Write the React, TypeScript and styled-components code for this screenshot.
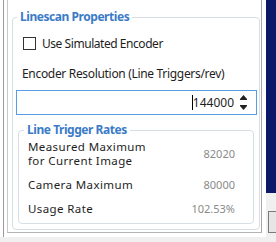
import React from "react";
import styled, { createGlobalStyle } from "styled-components";

const GlobalStyle = createGlobalStyle`
  html, body {
    margin: 0;
    padding: 0;
    background: #ffffff;
  }
  body {
    font-family: "Segoe UI", "Noto Sans", "Open Sans", sans-serif;
    color: #1e1e1e;
  }
`;

const Screen = styled.div`
  width: 276px;
  height: 242px;
  display: flex;
  flex-direction: column;
  overflow: hidden;
  background: #f0f0f0;
`;

const Main = styled.div`
  height: 237px;
  display: flex;
  background: #ffffff;
`;

const Pane = styled.div`
  margin-left: 3px;
  width: 260px;
  border-left: 1px solid #9a9a9a;
  display: flex;
`;

const Panel = styled.div`
  margin-left: 3px;
  width: 255px;
  height: 233px;
  border-left: 1px solid #c9c9c9;
  border-right: 1px solid #a8a8a8;
  border-bottom: 1px solid #b4b4b4;
  box-sizing: border-box;
`;

const SideColumn = styled.div`
  margin-left: 2px;
  flex: 1;
  display: flex;
  flex-direction: column;
`;

const NavyBar = styled.div`
  height: 193px;
  background: #0c1868;
`;

const SideRest = styled.div`
  flex: 1;
  background: #f0f0f0;
  padding-top: 18px;
  padding-left: 2px;
`;

const SideBox = styled.div`
  height: 20px;
  border: 1px solid #7a7a7a;
  border-right: none;
  background: #e6e6e6;
`;

const Group = styled.fieldset<{ $left: number; $width: number; $top: number }>`
  margin: ${({ $top }) => $top}px 0 0 ${({ $left }) => $left}px;
  width: ${({ $width }) => $width}px;
  padding: 0;
  min-width: 0;
  box-sizing: border-box;
  border: 1px solid #d5dfe5;
  border-radius: 4px;
`;

const GroupTitle = styled.legend<{ $indent: number }>`
  margin-left: ${({ $indent }) => $indent}px;
  padding: 0 3px;
  font-size: 12px;
  line-height: 14px;
  font-weight: 700;
  letter-spacing: -0.45px;
  color: #3b7bc8;
`;

const CheckRow = styled.label`
  display: flex;
  align-items: center;
  gap: 6px;
  margin: 11px 0 0 10px;
  height: 16px;
  font-size: 12px;
  letter-spacing: -0.45px;
`;

const CheckBox = styled.span`
  width: 13px;
  height: 13px;
  box-sizing: border-box;
  border: 1px solid #333333;
  background: #ffffff;
`;

const FieldLabel = styled.div`
  margin: 15px 0 0 9px;
  font-size: 12px;
  line-height: 16px;
  letter-spacing: -0.32px;
`;

const SpinInput = styled.div`
  margin: 8px 0 0 3px;
  width: 241px;
  height: 25px;
  box-sizing: border-box;
  border: 1px solid #569de5;
  display: flex;
  align-items: center;
  justify-content: flex-end;
  padding-right: 9px;
  font-size: 12px;
`;

const Caret = styled.span`
  width: 1px;
  height: 15px;
  background: #000000;
`;

const Value = styled.span`
  color: #1e1e1e;
  margin-right: 6px;
`;

const Spinner = styled.div`
  display: flex;
  flex-direction: column;
  gap: 5px;
`;

const RatesList = styled.div`
  display: flex;
  flex-direction: column;
  gap: 10px;
  padding: 3px 18px 7px 9px;
`;

const RateRow = styled.div`
  display: flex;
  align-items: center;
  justify-content: space-between;
  font-size: 11px;
  line-height: 14px;
`;

const RateLabel = styled.span`
  color: #1e1e1e;
  font-size: 11.5px;
  letter-spacing: 0.4px;
`;

const RateValue = styled.span`
  color: #8a8a8a;
`;

const rates = [
  { label: ["Measured Maximum", "for Current Image"], value: "82020" },
  { label: ["Camera Maximum"], value: "80000" },
  { label: ["Usage Rate"], value: "102.53%" },
];

const App = () => {
  return (
    <Screen>
      <GlobalStyle />
      <Main>
        <Pane>
          <Panel>
            <Group $left={4} $width={248} $top={10}>
              <GroupTitle $indent={4}>Linescan Properties</GroupTitle>
              <CheckRow>
                <CheckBox />
                Use Simulated Encoder
              </CheckRow>
              <FieldLabel>Encoder Resolution (Line Triggers/rev)</FieldLabel>
              <SpinInput>
                <Caret />
                <Value>144000</Value>
                <Spinner>
                  <svg width="7" height="5" viewBox="0 0 7 5">
                    <polygon points="3.5,0 7,4 0,4" fill="#222" />
                    <rect x="0" y="4" width="7" height="1" fill="#222" />
                  </svg>
                  <svg width="7" height="5" viewBox="0 0 7 5">
                    <rect x="0" y="0" width="7" height="1" fill="#222" />
                    <polygon points="0,1 7,1 3.5,5" fill="#222" />
                  </svg>
                </Spinner>
              </SpinInput>
              <Group $left={5} $width={236} $top={8} style={{ marginBottom: 5 }}>
                <GroupTitle $indent={5}>Line Trigger Rates</GroupTitle>
                <RatesList>
                  {rates.map((r) => (
                    <RateRow key={r.value}>
                      <RateLabel>
                        {r.label.map((l, i) => (
                          <div key={i}>{l}</div>
                        ))}
                      </RateLabel>
                      <RateValue>{r.value}</RateValue>
                    </RateRow>
                  ))}
                </RatesList>
              </Group>
            </Group>
          </Panel>
        </Pane>
        <SideColumn>
          <NavyBar />
          <SideRest>
            <SideBox />
          </SideRest>
        </SideColumn>
      </Main>
    </Screen>
  );
};

export default App;
